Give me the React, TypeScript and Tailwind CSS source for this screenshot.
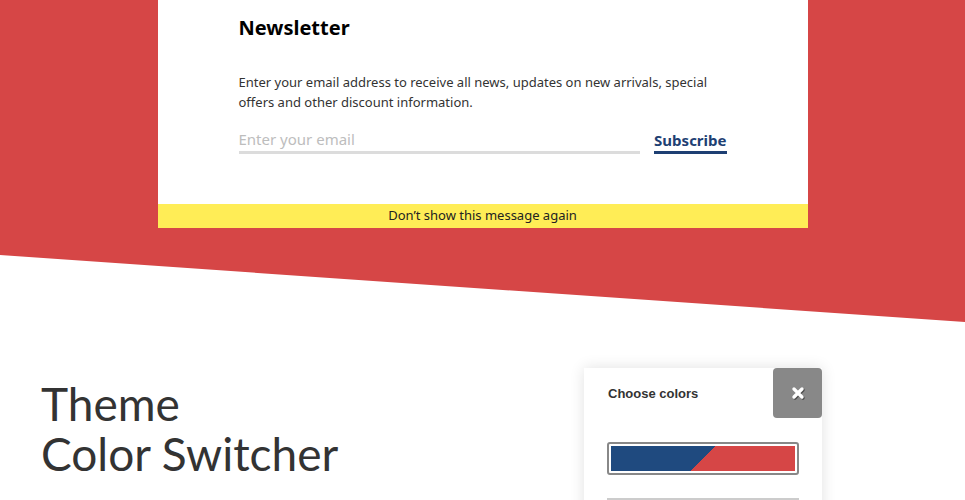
import React from "react";

function Newsletter() {
  return (
    <div className="mx-auto w-[650px] bg-white">
      <div className="px-[81px] pt-[14px] pb-[50px]">
        <h2 className="text-[20px] font-bold leading-[28px] text-black">Newsletter</h2>
        <p className="mt-[30px] text-[13px] leading-[20px] text-[#333]">
          Enter your email address to receive all news, updates on new arrivals, special offers and other discount information.
        </p>
        <div className="mt-[17px] flex items-end gap-[14px]">
          <div className="flex-1 border-b-[3px] border-[#dcdcdc] pb-[2px] text-[15px] leading-[20px] text-[#bdbdbd]">
            Enter your email
          </div>
          <div className="border-b-[3px] border-[#1e3f73] pb-[1px] text-[15px] font-bold leading-[20px] text-[#1e3f73]">
            Subscribe
          </div>
        </div>
      </div>
      <div className="flex h-[24px] items-center justify-center bg-[#ffed56] text-[13px] text-[#222]">
        Don’t show this message again
      </div>
    </div>
  );
}

function ColorPanel() {
  return (
    <div className="absolute left-[584px] top-[368px] w-[238px] bg-white pb-[40px] shadow-[0_0_14px_rgba(0,0,0,0.12)]">
      <div className="flex items-start justify-between">
        <div className="pl-[24px] pt-[16px] text-[13px] font-bold text-[#333] [font-family:'Liberation_Sans',Arial,sans-serif]">
          Choose colors
        </div>
        <div className="flex h-[50px] w-[49px] items-center justify-center rounded-[4px] bg-[#888]">
          <svg width="14" height="14" viewBox="0 0 14 14" className="drop-shadow-[1px_1px_0_rgba(0,0,0,0.45)]">
            <path d="M3 3 L11 11 M11 3 L3 11" stroke="#fff" strokeWidth="3.4" strokeLinecap="round" />
          </svg>
        </div>
      </div>
      <div className="mx-[23px] mt-[24px] rounded-[3px] border-2 border-[#888] p-[2px]">
        <div className="h-[25px] w-full bg-[linear-gradient(135deg,#1f4a7f_50%,#d64646_50%)]" />
      </div>
      <div className="mx-[23px] mt-[23px] h-[3px] bg-[#ccc]" />
    </div>
  );
}

export default function App() {
  return (
    <div className="relative h-[500px] w-[965px] overflow-hidden bg-white [font-family:'Noto_Sans',sans-serif]">
      <div className="relative h-[322px]">
        <div className="absolute inset-0 bg-[#d64646] [clip-path:polygon(0_0,100%_0,100%_322px,0_255px)]" />
        <div className="relative">
          <Newsletter />
        </div>
      </div>
      <div className="pl-[41px] pt-[57px]">
        <h1 className="text-[46px] font-normal leading-[50px] text-[#333] [font-family:'Lato',sans-serif]">
          Theme
          <br />
          Color Switcher
        </h1>
      </div>
      <ColorPanel />
    </div>
  );
}
